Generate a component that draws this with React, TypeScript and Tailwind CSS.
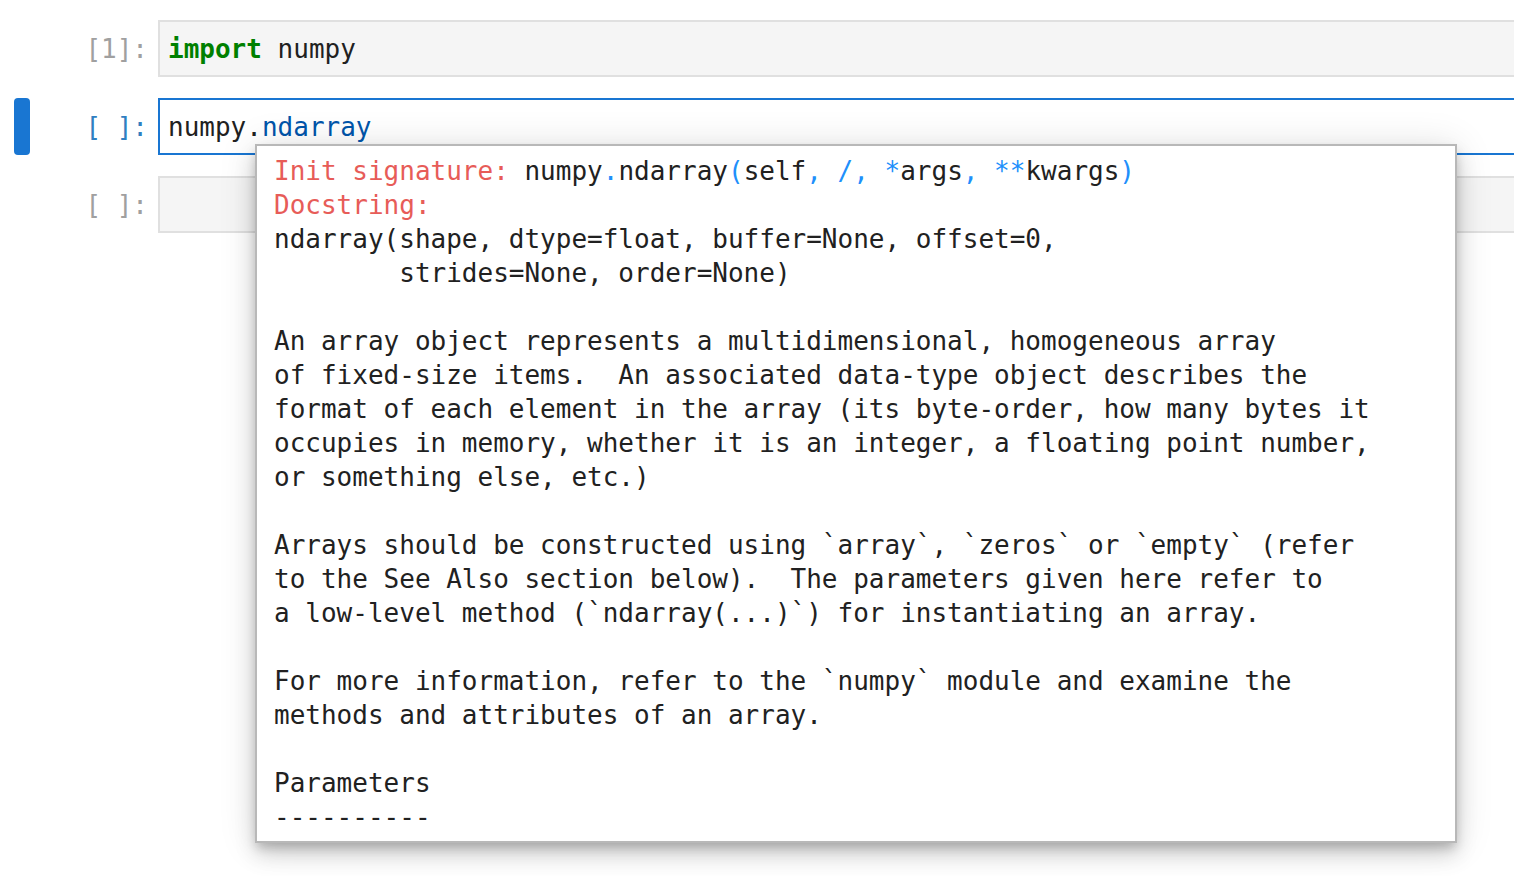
import React from "react";

const mono = { fontFamily: '"DejaVu Sans Mono", "Liberation Mono", monospace' };

function Cell({ prompt, active, children }: { prompt: string; active?: boolean; children?: React.ReactNode }) {
  return (
    <div className="flex h-[57px] items-stretch">
      <div className="w-[14px] shrink-0" />
      <div className={active ? "w-[16px] shrink-0 rounded-[4px] bg-[#1976d2]" : "w-[16px] shrink-0"} />
      <div className={active ? "flex w-[118px] shrink-0 items-center justify-end text-[26px] leading-[34px] text-[#307fc1]" : "flex w-[118px] shrink-0 items-center justify-end text-[26px] leading-[34px] text-[#a0a0a0]"}>
        <span className="whitespace-pre">{prompt}</span>
      </div>
      <div className="w-[10px] shrink-0" />
      <div
        className={
          active
            ? "flex w-[1500px] shrink-0 items-center border-2 border-[#1976d2] bg-white pl-[8px] text-[26px] leading-[34px] text-[#212121]"
            : "flex w-[1500px] shrink-0 items-center border-2 border-[#e0e0e0] bg-[#f5f5f5] pl-[8px] text-[26px] leading-[34px] text-[#212121]"
        }
      >
        <span className="whitespace-pre">{children}</span>
      </div>
    </div>
  );
}

const B = ({ children }: { children: React.ReactNode }) => <span className="text-[#208ffb]">{children}</span>;
const R = ({ children }: { children: React.ReactNode }) => <span className="text-[#e75c58]">{children}</span>;

const doc = `ndarray(shape, dtype=float, buffer=None, offset=0,
        strides=None, order=None)

An array object represents a multidimensional, homogeneous array
of fixed-size items.  An associated data-type object describes the
format of each element in the array (its byte-order, how many bytes it
occupies in memory, whether it is an integer, a floating point number,
or something else, etc.)

Arrays should be constructed using \`array\`, \`zeros\` or \`empty\` (refer
to the See Also section below).  The parameters given here refer to
a low-level method (\`ndarray(...)\`) for instantiating an array.

For more information, refer to the \`numpy\` module and examine the
methods and attributes of an array.

Parameters
----------`;

export default function App() {
  return (
    <div className="relative h-[876px] w-[1514px] overflow-hidden bg-white" style={mono}>
      <div className="flex flex-col gap-[21px] pt-[20px]">
        <Cell prompt="[1]:">
          <span className="font-bold text-[#008000]">import</span> numpy
        </Cell>
        <Cell prompt="[ ]:" active>
          numpy.<span className="text-[#0055aa]">ndarray</span>
        </Cell>
        <Cell prompt="[ ]:" />
      </div>

      <div className="absolute left-[255px] top-[144px] h-[699px] w-[1202px] overflow-hidden border-2 border-[#b8b8b8] bg-white pl-[17px] pt-[8px] text-[26px] leading-[34px] text-[#212121] shadow-[0_6px_10px_-2px_rgba(0,0,0,0.2),0_12px_20px_0_rgba(0,0,0,0.14),0_2px_36px_0_rgba(0,0,0,0.12)]">
        <pre className="whitespace-pre" style={mono}>
          <R>Init signature:</R> numpy<B>.</B>ndarray<B>(</B>self<B>, /, *</B>args<B>, **</B>kwargs<B>)</B>
          {"\n"}
          <R>Docstring:</R>
          {"\n"}
          {doc}
        </pre>
      </div>
    </div>
  );
}
